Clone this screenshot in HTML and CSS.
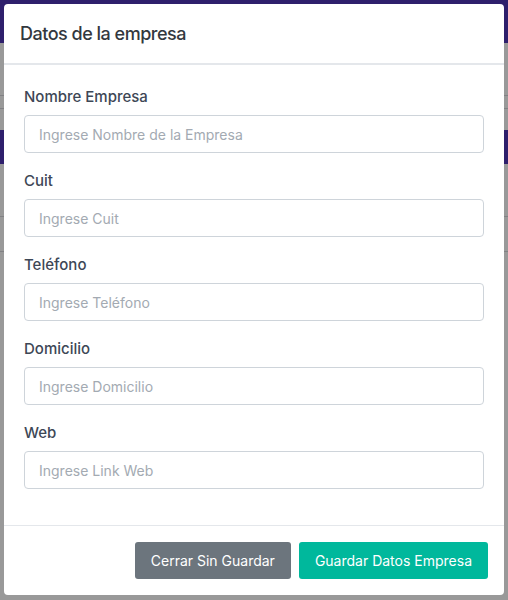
FILE: index.html
```html
<!DOCTYPE html>
<html lang="es">
<head>
  <meta charset="UTF-8">
  <title>Datos de la empresa</title>
  <link rel="stylesheet" href="styles.css">
</head>
<body>

<nav class="navbar"></nav>
<div class="page">
  <div class="page-row"></div>
  <div class="page-row short"></div>
  <div class="page-band"></div>
  <div class="page-row"></div>
  <div class="page-row tall"></div>
</div>

<div class="backdrop"></div>

<div class="modal">
  <div class="modal-header">
    <h5 class="modal-title">Datos de la empresa</h5>
  </div>

  <form class="modal-body" onsubmit="return false">
    <div class="form-group">
      <label for="nombre">Nombre Empresa</label>
      <input type="text" id="nombre" placeholder="Ingrese Nombre de la Empresa">
    </div>
    <div class="form-group">
      <label for="cuit">Cuit</label>
      <input type="text" id="cuit" placeholder="Ingrese Cuit">
    </div>
    <div class="form-group">
      <label for="telefono">Teléfono</label>
      <input type="text" id="telefono" placeholder="Ingrese Teléfono">
    </div>
    <div class="form-group">
      <label for="domicilio">Domicilio</label>
      <input type="text" id="domicilio" placeholder="Ingrese Domicilio">
    </div>
    <div class="form-group">
      <label for="web">Web</label>
      <input type="text" id="web" placeholder="Ingrese Link Web">
    </div>
  </form>

  <div class="modal-footer">
    <button type="button" class="btn btn-secondary">Cerrar Sin Guardar</button>
    <button type="button" class="btn btn-success">Guardar Datos Empresa</button>
  </div>
</div>

</body>
</html>
```

FILE: styles.css
```css
body {
  margin: 0;
  font-family: Inter, "Noto Sans", sans-serif;
  background: #fff;
  height: 600px;
  overflow: hidden;
}

.navbar {
  height: 43px;
  background: #4d34b4;
}

.page-row {
  height: 52px;
  border-bottom: 1px solid #d8d8dc;
}

.page-row.short {
  height: 12px;
}

.page-band {
  height: 34px;
  margin-top: 21px;
  background: #4d34b4;
}

.page-row.tall {
  height: 34px;
}

.backdrop {
  position: fixed;
  inset: 0;
  background: rgba(0, 0, 0, 0.4);
}

.modal {
  position: fixed;
  top: 4px;
  left: 4px;
  width: 500px;
  height: 591px;
  background: #fff;
  border-radius: 4px;
  display: flex;
  flex-direction: column;
}

.modal-header {
  height: 59px;
  padding: 0 16px;
  display: flex;
  align-items: center;
  border-bottom: 2px solid #e4e7eb;
}

.modal-title {
  margin: 0;
  font-size: 18px;
  font-weight: 500;
  letter-spacing: -0.5px;
  color: #33383e;
}

.modal-body {
  flex: 1;
  padding: 21px 20px 3px;
}

.form-group {
  display: flex;
  flex-direction: column;
  gap: 7px;
  margin-bottom: 17px;
}

label {
  font-size: 15px;
  line-height: 22px;
  font-weight: 500;
  color: #3d4756;
}

input {
  height: 38px;
  box-sizing: border-box;
  padding: 0 14px;
  border: 1px solid #ced4da;
  border-radius: 4px;
  font-family: inherit;
  font-size: 14px;
  color: #495057;
}

input::placeholder {
  color: #a3aab2;
}

.modal-footer {
  border-top: 1px solid #e4e7eb;
  padding: 16px;
  display: flex;
  justify-content: flex-end;
  gap: 8px;
}

.btn {
  height: 37px;
  padding: 0 16px;
  border: none;
  border-radius: 3px;
  font-family: inherit;
  font-size: 14px;
  color: #fff;
  cursor: pointer;
}

.btn-secondary {
  background: #6c757d;
}

.btn-success {
  background: #00b89c;
}
```
